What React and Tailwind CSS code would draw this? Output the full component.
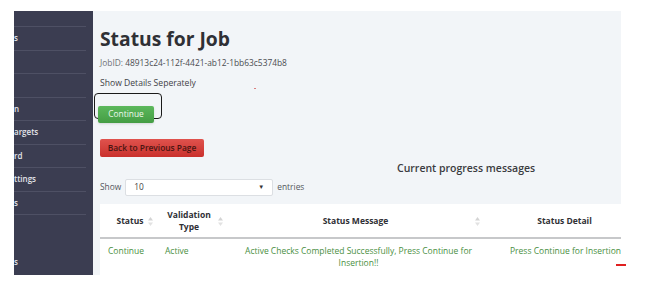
import React from 'react';

const font = { fontFamily: '"Open Sans", "Noto Sans", sans-serif' };

const SortIcon = ({ className }) => (
    <svg width="5" height="9" viewBox="0 0 5 9" className={className}>
        <path d="M2.5 0 L5 3.5 L0 3.5 Z" fill="#d4d4d4" />
        <path d="M2.5 9 L5 5.5 L0 5.5 Z" fill="#e2e2e2" />
    </svg>
);

const sideItems = ['s', '', '', 'n', 'argets', 'rd', 'ttings', 's'];

const Sidebar = () => (
    <div className="w-[79px] h-[264px] bg-[#3b3d51] flex flex-col shrink-0">
        <div className="h-[16px] w-[72px] border-b border-[#4e5064]" />
        {sideItems.map((label, i) => (
            <div
                key={i}
                className="h-[23.5px] w-[72px] border-b border-[#4e5064] flex items-center text-[8px] font-semibold text-[#e4e5ea] leading-none"
            >
                {label}
            </div>
        ))}
        <div className="flex-1 flex items-end pb-[9px] text-[8px] font-semibold text-[#e4e5ea] leading-none">s</div>
    </div>
);

const App = () => {
    return (
        <div className="w-[655px] h-[283px] bg-white overflow-hidden" style={font}>
            <div className="flex pt-[11px] pl-[14px]">
                <Sidebar />
                <div className="w-[528px] h-[264px] bg-[#f2f5f8] flex flex-col relative">
                    <div className="pl-[7px] pt-[18px]">
                        <h1 className="text-[19.3px] leading-[20px] font-bold text-[#2f3035]">Status for Job</h1>
                        <p className="mt-[8px] text-[8.4px] leading-[12px] text-[#4a4c51]">
                            <span className="text-[#6f7176]">JobID:</span> 48913c24-112f-4421-ab12-1bb63c5374b8
                        </p>
                        <p className="mt-[8px] text-[8.6px] leading-[12px] text-[#3f4146]">Show Details Seperately</p>
                        <span className="absolute left-[161px] top-[77px] w-[2px] h-[1px] bg-[#d98080]" />
                        <div className="mt-[4px] ml-[-6px] w-[68px] h-[26px] border-[1.5px] border-[#1a1a1a] rounded-[4px] pl-[3px] pt-[5px]">
                            <button className="w-[56px] h-[17px] rounded-[2px] bg-gradient-to-b from-[#5cb85c] to-[#449d44] text-[8.4px] text-[#eef8ee] leading-none shadow-sm">
                                Continue
                            </button>
                        </div>
                        <button className="mt-[20px] w-[104px] h-[18px] rounded-[2px] bg-gradient-to-b from-[#e0524d] to-[#c9302c] text-[8.4px] font-semibold text-[#4a1512] leading-none block">
                            Back to Previous Page
                        </button>
                        <div className="mt-[5px] pl-[297px] text-[10.5px] leading-[12px] font-semibold text-[#3a3b40]">
                            Current progress messages
                        </div>
                        <div className="mt-[5px] flex items-center text-[8.4px] text-[#55575c]">
                            <span>Show</span>
                            <div className="ml-[4px] w-[148px] h-[17px] bg-white border border-[#dcdfe3] rounded-[2px] flex items-center justify-between px-[8px]">
                                <span className="text-[#444]">10</span>
                                <span className="text-[6px] text-[#333]">▼</span>
                            </div>
                            <span className="ml-[4px]">entries</span>
                        </div>
                    </div>
                    <div className="ml-[7px] mt-[8px] flex-1 bg-white">
                        <table className="table-fixed w-[521px] border-collapse text-[8.5px]">
                            <colgroup>
                                <col className="w-[60px]" />
                                <col className="w-[72px]" />
                                <col className="w-[258px]" />
                                <col className="w-[131px]" />
                            </colgroup>
                            <thead>
                                <tr className="h-[34px] border-b-2 border-[#c7c8ca] font-bold text-[#2f3035] leading-[12px]">
                                    <th className="relative text-center font-bold">
                                        Status
                                        <SortIcon className="absolute right-[7px] top-[13px]" />
                                    </th>
                                    <th className="relative text-center font-bold pr-[14px]">
                                        Validation
                                        <br />
                                        Type
                                        <SortIcon className="absolute right-[9px] top-[13px]" />
                                    </th>
                                    <th className="relative text-center font-bold pr-[11px]">
                                        Status Message
                                        <SortIcon className="absolute right-[10px] top-[13px]" />
                                    </th>
                                    <th className="text-center font-bold pl-[18px]">Status Detail</th>
                                </tr>
                            </thead>
                            <tbody>
                                <tr className="align-top text-[#4a8f3f] leading-[12px]">
                                    <td className="pt-[6px] text-center pr-[8px]">Continue</td>
                                    <td className="pt-[6px] pl-[5px]">Active</td>
                                    <td className="pt-[6px] text-center pl-[6px] pr-[11px]">
                                        Active Checks Completed Successfully, Press Continue for Insertion!!
                                    </td>
                                    <td className="pt-[6px] pl-[20px] whitespace-nowrap">Press Continue for Insertion</td>
                                </tr>
                            </tbody>
                        </table>
                    </div>
                </div>
            </div>
            <div className="relative">
                <span className="absolute left-[616px] top-[-11px] w-[10px] h-[2px] bg-[#e02020]" />
            </div>
        </div>
    );
};

export default App;
